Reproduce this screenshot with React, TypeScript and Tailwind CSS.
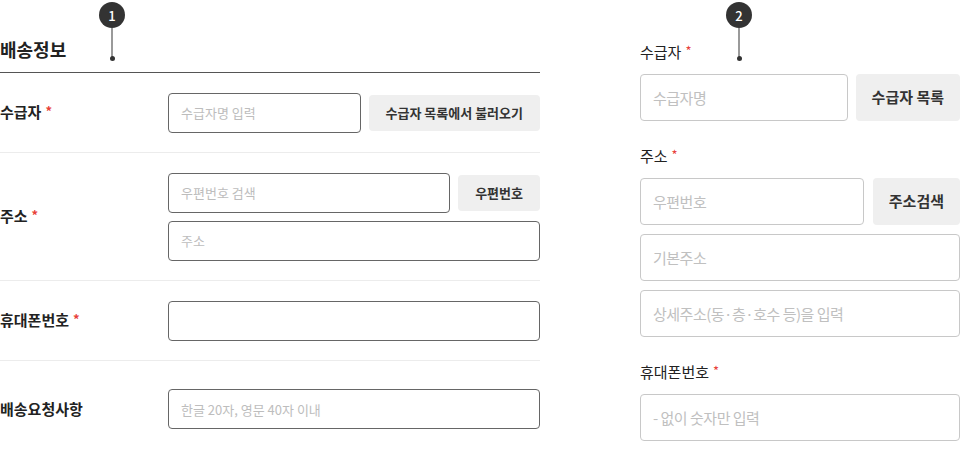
import React from 'react';

function Marker({ n, left }: { n: number; left: string }) {
  return (
    <div className={`absolute top-[2px] ${left} flex w-[26px] flex-col items-center`}>
      <div className="flex h-[26px] w-[26px] items-center justify-center rounded-full bg-[#333] text-[13px] font-medium leading-none text-white">
        {n}
      </div>
      <div className="h-[29px] w-[2px] bg-[#9a9a9a]" />
      <div className="-mt-[1px] h-[5px] w-[5px] rounded-full bg-[#333]" />
    </div>
  );
}

function Req() {
  return <span className="relative -top-[2px] ml-[4px] text-[13px] text-[#e8413a]">*</span>;
}

function LeftRow({
  label,
  required,
  className,
  children,
}: {
  label: string;
  required?: boolean;
  className: string;
  children: React.ReactNode;
}) {
  return (
    <div className={`flex items-center border-b border-[#ececec] ${className}`}>
      <div className="w-[168px] shrink-0 text-[15px] font-bold leading-[22px] text-[#222]">
        {label}
        {required && <Req />}
      </div>
      <div className="flex flex-1 flex-col gap-2">{children}</div>
    </div>
  );
}

const leftInput =
  'h-[40px] w-full min-w-0 rounded-[4px] border border-[#666] bg-white px-[12px] text-[13px] text-[#222] outline-none placeholder:text-[#bdbdbd]';
const leftBtn =
  'flex h-9 shrink-0 items-center rounded-[4px] bg-[#efefef] px-[17px] text-[13px] font-semibold text-[#333]';
const rightInput =
  'h-[47px] w-full min-w-0 rounded-[4px] border border-[#c8c8c8] bg-white px-[12px] text-[15px] tracking-[-0.5px] text-[#222] outline-none placeholder:text-[#c0c0c0]';
const rightBtn =
  'flex h-[47px] shrink-0 items-center rounded-[4px] bg-[#efefef] px-[16px] text-[15px] font-semibold text-[#333]';

function RightLabel({ children }: { children: React.ReactNode }) {
  return (
    <div className="mb-[10px] text-[15px] leading-[22px] text-[#222]">
      {children}
      <Req />
    </div>
  );
}

export default function App() {
  return (
    <div className="relative h-[466px] w-[980px] overflow-hidden bg-white font-['Noto_Sans_CJK_KR','Noto_Sans',sans-serif]">
      <div className="flex">
        {/* desktop form */}
        <section className="w-[540px] pt-[36px]">
          <h2 className="border-b border-[#555] pb-[10px] text-[18px] font-bold leading-[26px] text-[#222]">
            배송정보
          </h2>
          <LeftRow label="수급자" required className="h-[80px]">
            <div className="flex items-center gap-2">
              <input className={leftInput} placeholder="수급자명 입력" />
              <button className={leftBtn}>수급자 목록에서 불러오기</button>
            </div>
          </LeftRow>
          <LeftRow label="주소" required className="h-[128px]">
            <div className="flex items-center gap-2">
              <input className={leftInput} placeholder="우편번호 검색" />
              <button className={leftBtn}>우편번호</button>
            </div>
            <input className={leftInput} placeholder="주소" />
          </LeftRow>
          <LeftRow label="휴대폰번호" required className="h-[80px]">
            <input className={leftInput} />
          </LeftRow>
          <div className="flex items-center pt-[28px]">
            <div className="w-[168px] shrink-0 text-[15px] font-bold leading-[22px] text-[#222]">
              배송요청사항
            </div>
            <input className={leftInput} placeholder="한글 20자, 영문 40자 이내" />
          </div>
        </section>

        {/* mobile form */}
        <section className="ml-[100px] w-[320px] pt-[41px]">
          <RightLabel>수급자</RightLabel>
          <div className="flex gap-2">
            <input className={rightInput} placeholder="수급자명" />
            <button className={rightBtn}>수급자 목록</button>
          </div>

          <div className="mt-[24px]">
            <RightLabel>주소</RightLabel>
            <div className="flex flex-col gap-[9px]">
              <div className="flex gap-[9px]">
                <input className={rightInput} placeholder="우편번호" />
                <button className={rightBtn}>주소검색</button>
              </div>
              <input className={rightInput} placeholder="기본주소" />
              <input className={rightInput} placeholder="상세주소(동·층·호수 등)을 입력" />
            </div>
          </div>

          <div className="mt-[24px]">
            <RightLabel>휴대폰번호</RightLabel>
            <input className={rightInput} placeholder="- 없이 숫자만 입력" />
          </div>
        </section>
      </div>

      <Marker n={1} left="left-[99px]" />
      <Marker n={2} left="left-[726px]" />
    </div>
  );
}
